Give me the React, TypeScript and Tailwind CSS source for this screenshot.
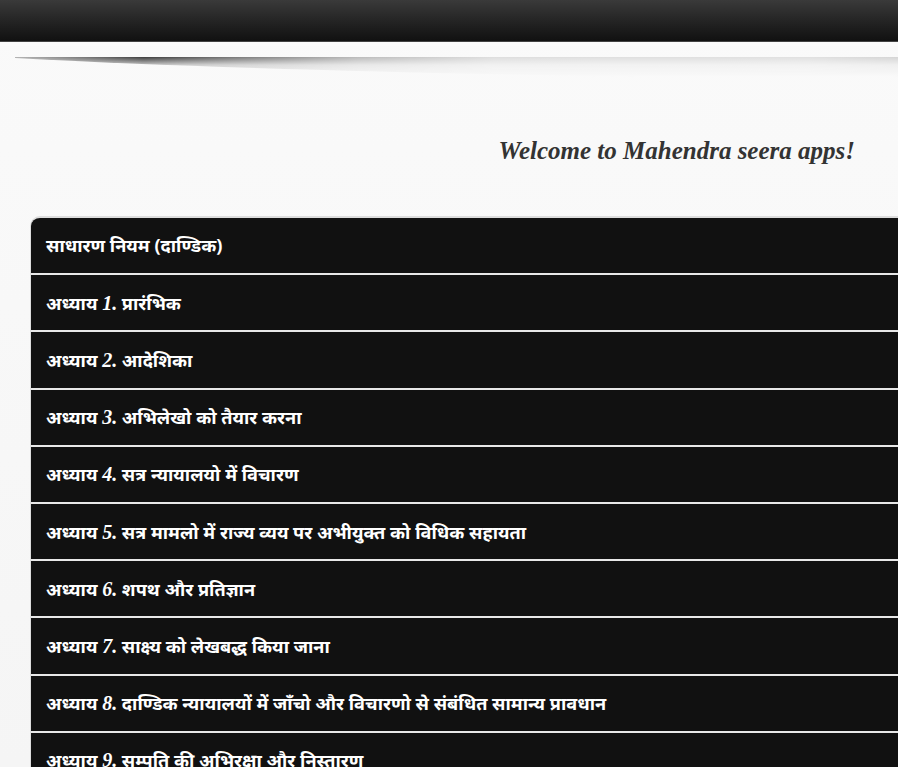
import React from 'react';

const ROWS = [
  { title: 'साधारण नियम (दाण्डिक)' },
  { num: '1.', title: 'प्रारंभिक' },
  { num: '2.', title: 'आदेशिका' },
  { num: '3.', title: 'अभिलेखो को तैयार करना' },
  { num: '4.', title: 'सत्र न्यायालयो में विचारण' },
  { num: '5.', title: 'सत्र मामलो में राज्य व्यय पर अभीयुक्त को विधिक सहायता' },
  { num: '6.', title: 'शपथ और प्रतिज्ञान' },
  { num: '7.', title: 'साक्ष्य को लेखबद्ध किया जाना' },
  { num: '8.', title: 'दाण्डिक न्यायालयों में जाँचो और विचारणो से संबंधित सामान्य प्रावधान' },
  { num: '9.', title: 'सम्पति की अभिरक्षा और निस्तारण' },
];

const App = () => {
  return (
    <div className="h-[767px] overflow-hidden bg-gradient-to-b from-[#fafafa] to-[#f5f5f5]">
      {/* Header */}
      <header className="h-[42px] border-b border-[#444] bg-gradient-to-b from-[#3a3a3a] to-[#111] shadow-[0_4px_0_#fbfbfb]" />

      {/* Shadow under the header */}
      <svg className="mt-[15px] block h-[30px] w-full" viewBox="0 0 898 30" preserveAspectRatio="none">
        <defs>
          <linearGradient id="shade" x1="0" x2="898" y1="0" y2="0" gradientUnits="userSpaceOnUse">
            <stop offset="0" stopColor="#bbb" />
            <stop offset="0.05" stopColor="#999" />
            <stop offset="0.16" stopColor="#3c3c3c" />
            <stop offset="0.26" stopColor="#777" />
            <stop offset="0.4" stopColor="#bbb" />
            <stop offset="0.55" stopColor="#ddd" />
            <stop offset="0.9" stopColor="#e0e0e0" />
            <stop offset="1" stopColor="#d4d4d4" />
          </linearGradient>
          <linearGradient id="fade" x1="0" x2="0" y1="0" y2="20" gradientUnits="userSpaceOnUse">
            <stop offset="0" stopColor="#fff" />
            <stop offset="0.4" stopColor="#444" />
            <stop offset="1" stopColor="#000" />
          </linearGradient>
          <mask id="fadeMask" maskUnits="userSpaceOnUse" x="0" y="0" width="898" height="30">
            <rect x="0" y="0" width="898" height="30" fill="url(#fade)" />
          </mask>
        </defs>
        <path d="M15 0 L898 0 L898 24 C600 20 250 14 15 1 Z" fill="url(#shade)" mask="url(#fadeMask)" />
      </svg>

      {/* Welcome line */}
      <h1 className="mt-[42px] pr-[43px] text-right font-['Liberation_Serif',serif] text-[25px] leading-[44px] font-bold text-[#333] italic">
        Welcome to Mahendra seera apps!
      </h1>

      {/* Chapter list */}
      <ul className="mt-[43px] ml-[30px] w-[900px] overflow-hidden rounded-tl-[10px] border-t-2 border-l border-[#ddd] font-['Noto_Sans','Liberation_Sans',sans-serif]">
        {ROWS.map((row) => (
          <li
            key={row.title}
            className="flex h-[57.2px] items-center border-b-2 border-[#e8e8e8] bg-[#111] px-[15px] text-[18.15px] font-bold whitespace-nowrap text-white"
          >
            <span>
              {row.num ? (
                <>
                  अध्याय <span className="font-['Liberation_Serif',serif] text-[20px] italic">{row.num}</span> {row.title}
                </>
              ) : (
                row.title
              )}
            </span>
          </li>
        ))}
      </ul>
    </div>
  );
};

export default App;
